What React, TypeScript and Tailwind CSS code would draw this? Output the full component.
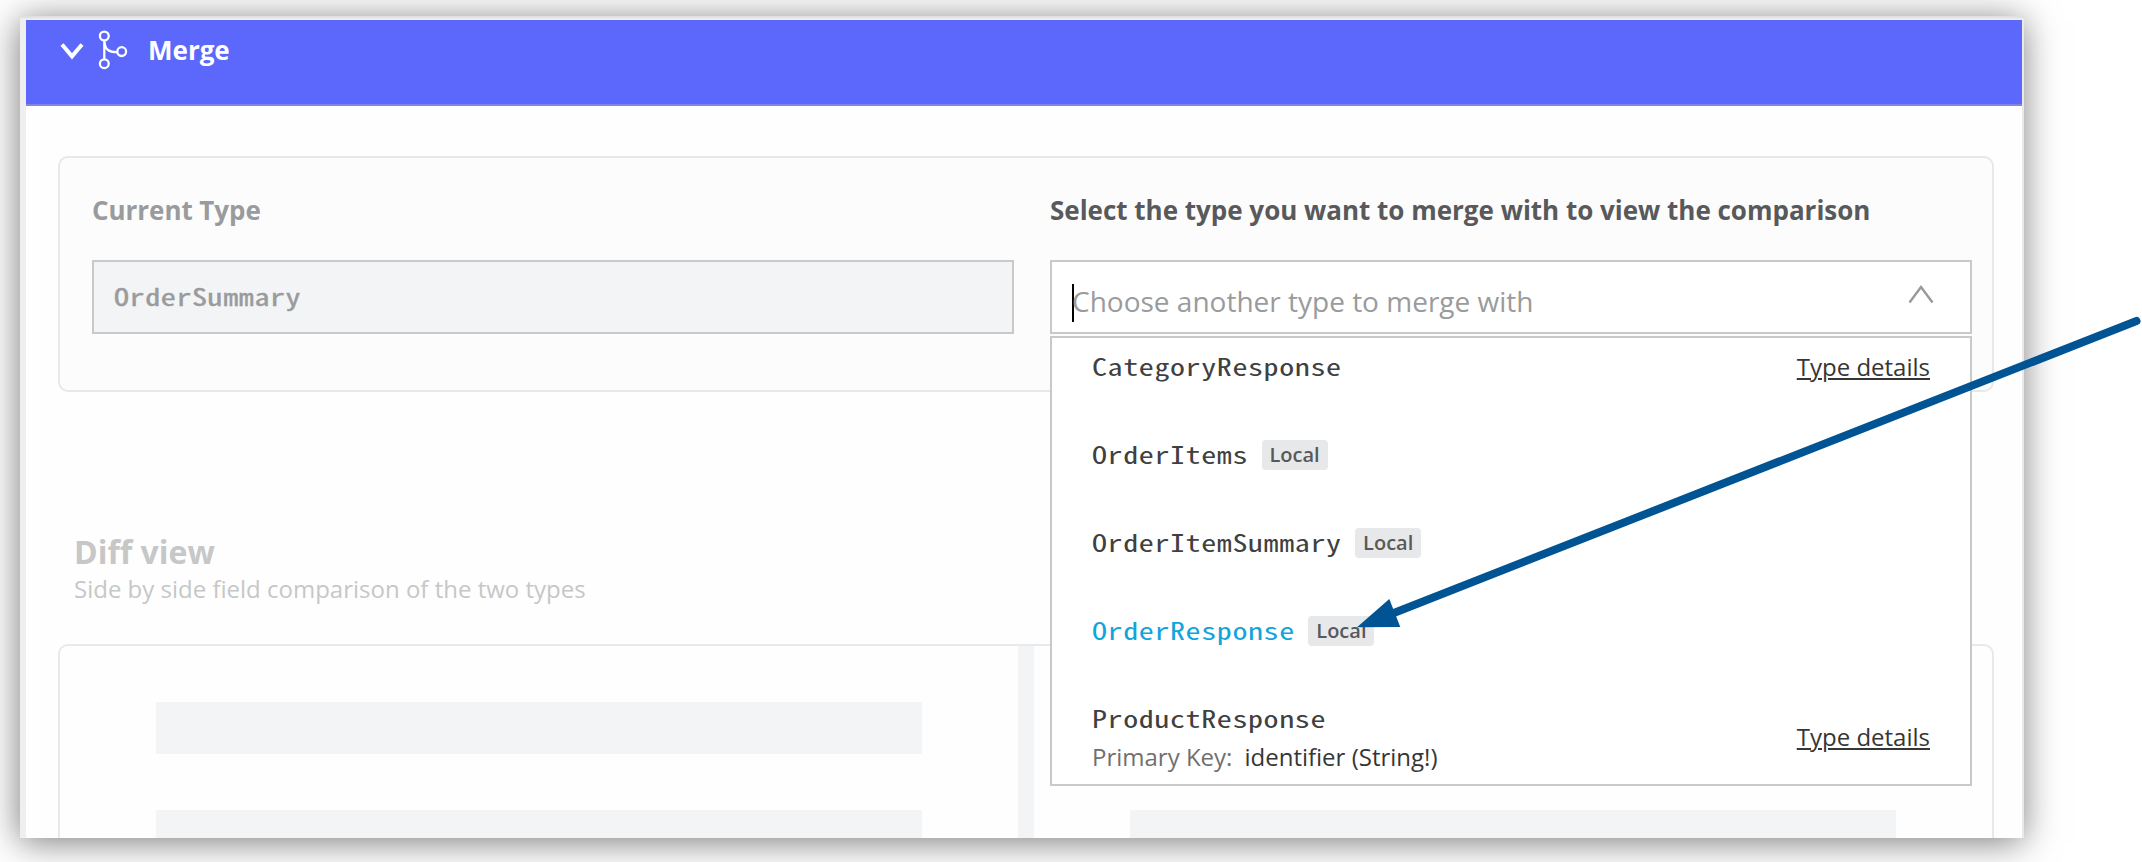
import React from "react";

type TypeOption = {
  name: string;
  local?: boolean;
  active?: boolean;
  details?: boolean;
  primaryKey?: string;
};

const options: TypeOption[] = [
  { name: "CategoryResponse", details: true },
  { name: "OrderItems", local: true },
  { name: "OrderItemSummary", local: true },
  { name: "OrderResponse", local: true, active: true },
  { name: "ProductResponse", details: true, primaryKey: "identifier (String!)" },
];

const CHAR_WIDTH = 15.6;

function Code({ text, className }: { text: string; className: string }) {
  return (
    <span className={"block h-[38px] whitespace-nowrap " + className} style={{ width: text.length * CHAR_WIDTH }}>
      <span className="inline-block origin-left scale-x-125 align-top font-['Noto_Sans_Mono_CJK_SC','DejaVu_Sans_Mono',monospace] text-[24px] leading-[35px] tracking-[0.48px]">
        {text}
      </span>
    </span>
  );
}

function MergeIcon() {
  return (
    <svg className="ml-[13px] h-10 w-8" viewBox="0 0 32 40" fill="none" stroke="white" strokeWidth="2.3">
      <circle cx="7.3" cy="6" r="4.4" />
      <circle cx="7.3" cy="33.7" r="4.4" />
      <circle cx="24.7" cy="21.6" r="4.4" />
      <path d="M7.3 10.4V29.3M7.6 12C7.6 19 12 22.4 20.3 22.2" />
    </svg>
  );
}

function Option({ option }: { option: TypeOption }) {
  return (
    <li
      className={
        "flex shrink-0 items-center justify-between pr-10 pl-10 " + (option.primaryKey ? "h-[124px]" : "h-[88px]")
      }
    >
      <div>
        <div className="flex items-center">
          <Code text={option.name} className={option.active ? "text-[#12a4dd]" : "text-[#404040]"} />
          {option.local && (
            <span className="ml-[13.6px] flex h-[30px] w-[66px] items-center justify-center rounded-[4px] bg-[#e7e8ea] text-[20px] font-semibold text-[#58595b]">
              Local
            </span>
          )}
        </div>
        {option.primaryKey && (
          <div className="pt-px text-[24px] leading-[36px] text-[#363636]">
            <span className="mr-3 text-[#707070]">Primary Key:</span>
            {option.primaryKey}
          </div>
        )}
      </div>
      {option.details && (
        <a className="text-[24px] leading-[38px] text-[#363636] underline decoration-2 underline-offset-2">Type details</a>
      )}
    </li>
  );
}

export default function App() {
  return (
    <div className="relative h-[862px] w-[2142px] overflow-hidden bg-white pt-4 pl-5 font-['Open_Sans',sans-serif]">
      <div className="h-[822px] w-[2004px] bg-[#e0e0e0] pt-0.5 shadow-[-1px_4px_34px_rgba(0,0,0,0.52)]">
        <div className="h-[820px] border-t-2 border-r-2 border-l-6 border-t-[#eeeeee] border-r-[#e9e9e9] border-l-[#efeff0] bg-[#fefefe]">
          <div className="flex h-full flex-col overflow-hidden">
            <header className="flex h-[86px] shrink-0 items-start border-b-2 border-[#7f84e6] bg-[#5c68fb] pt-2.5 pl-[34px]">
              <svg className="mt-3 h-6 w-6" viewBox="0 0 24 24" fill="none" stroke="white" strokeWidth="4">
                <path d="M2 2.5L12 14.3L22 2.5" />
              </svg>
              <MergeIcon />
              <h1 className="ml-[19px] text-[26px] leading-10 font-bold text-white">Merge</h1>
            </header>

            <section className="mt-[50px] mr-7 ml-8 grid h-[236px] shrink-0 grid-cols-[922px_922px] gap-x-9 rounded-[10px] border-2 border-[#e8e8e8] bg-[#fcfcfc] pt-[34px] pl-8">
              <div>
                <h2 className="text-[26px] leading-9 font-bold tracking-[-0.05px] text-[#999b9c]">Current Type</h2>
                <div className="mt-8 flex h-[74px] items-center border-2 border-[#c9c9c9] bg-[#f3f4f6] pl-5">
                  <Code text="OrderSummary" className="text-[#999b9c] [-webkit-text-stroke:0.4px_#999b9c]" />
                </div>
              </div>
              <div className="relative">
                <h2 className="text-[26px] leading-9 font-bold tracking-[-0.01px] whitespace-nowrap text-[#58595b]">
                  Select the type you want to merge with to view the comparison
                </h2>
                <div className="mt-8 flex h-[74px] items-start border-2 border-[#c9c9c9] bg-white pl-5">
                  <span className="mt-[22px] h-[38px] w-0.5 bg-black" />
                  <span className="mt-[19px] -ml-0.5 flex-1 text-[28px] leading-10 text-[#999b9c]">
                    Choose another type to merge with
                  </span>
                  <svg className="mt-[22px] mr-[35px] h-[20px] w-[28px]" viewBox="0 0 28 20" fill="none" stroke="#999" strokeWidth="2.4">
                    <path d="M2.5 18.5L14 3L25.5 18.5" />
                  </svg>
                </div>
                <ul className="absolute top-[144px] left-0 z-10 flex h-[450px] w-[922px] flex-col overflow-hidden border-2 border-[#c9c9c9] bg-white">
                  <li className="-mt-[15px] shrink-0" />
                  {options.map((option) => (
                    <Option key={option.name} option={option} />
                  ))}
                </ul>
              </div>
            </section>

            <div className="mt-[138px] h-[114px] shrink-0 pl-12 text-[#c6c7c7]">
              <h2 className="text-[32px] leading-[44px] font-bold">Diff view</h2>
              <p className="text-[24px] leading-[30px]">Side by side field comparison of the two types</p>
            </div>

            <section className="mr-7 ml-8 flex h-[260px] shrink-0 rounded-t-[10px] border-2 border-b-0 border-[#e8e9ea]">
              <div className="flex w-[958px] flex-col gap-14 pt-14 pl-24">
                <div className="h-[52px] w-[766px] bg-[#f3f4f6]" />
                <div className="h-[52px] w-[766px] bg-[#f3f4f6]" />
              </div>
              <div className="w-4 bg-[#f3f4f6]" />
              <div className="flex flex-1 flex-col gap-14 pt-14 pl-24">
                <div className="h-[52px] w-[766px] bg-[#f3f4f6]" />
                <div className="h-[52px] w-[766px] bg-[#f3f4f6]" />
              </div>
            </section>
          </div>
        </div>
      </div>

      <svg className="pointer-events-none absolute inset-0 z-20 h-full w-full" viewBox="0 0 2142 862">
        <path d="M2136.5 321L1390 614.5" stroke="#005493" strokeWidth="8" strokeLinecap="round" />
        <path d="M1357 627.3L1389.3 599L1400.3 627Z" fill="#005493" />
      </svg>
    </div>
  );
}
